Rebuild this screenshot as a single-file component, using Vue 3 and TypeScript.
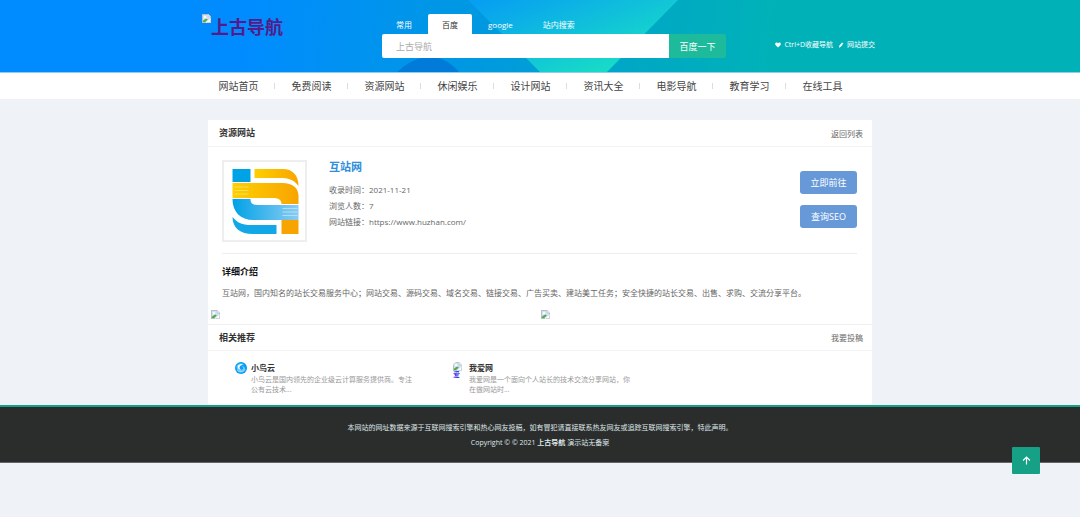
<script setup lang="ts">
import { ref } from 'vue'

interface Engine { name: string; action: string }
interface Site { name: string; text: string; icon: 'bird' | 'missing' }

const engines: Engine[] = [
  { name: '常用', action: '搜索' },
  { name: '百度', action: '百度一下' },
  { name: 'google', action: 'google' },
  { name: '站内搜索', action: '站内搜索' },
]
const active = ref(1)
const query = ref('')

const menu: string[] = ['网站首页', '免费阅读', '资源网站', '休闲娱乐', '设计网站', '资讯大全', '电影导航', '教育学习', '在线工具']

const sites: Site[] = [
  { name: '小鸟云', text: '小鸟云是国内领先的企业级云计算服务提供商。专注公有云技术...', icon: 'bird' },
  { name: '我爱网', text: '我爱网是一个面向个人站长的技术交流分享网站，你在做网站时...', icon: 'missing' },
]

function toTop(): void {
  window.scrollTo({ top: 0, behavior: 'smooth' })
}
</script>

<template>
  <div class="page">
    <svg class="defs" aria-hidden="true">
      <symbol id="missing" viewBox="0 0 10 10">
        <path d="M0 0H7L10 3V10H0Z" fill="#b9bec4" />
        <path d="M1 1H6.5V3.5H9V9H1Z" fill="#cfe0f7" />
        <circle cx="3.4" cy="3.6" r="1.3" fill="#fff" />
        <path d="M1 9V7.5L4.5 5L6.5 6.2L3.5 9Z" fill="#4fae3c" />
        <path d="M4 10L10 4.6V10Z" fill="#fff" />
        <path d="M7 0V3H10Z" fill="#e4e6e9" />
        <path d="M5.5 9.5H9.5V6" fill="none" stroke="#b9bec4" stroke-width="0.8" />
      </symbol>
    </svg>

    <header class="top">
      <svg class="art" viewBox="0 0 1080 72" preserveAspectRatio="none" aria-hidden="true">
        <defs>
          <linearGradient id="base" gradientUnits="userSpaceOnUse" x1="250" y1="0" x2="770" y2="60">
            <stop offset="0" stop-color="#008cff" />
            <stop offset="0.45" stop-color="#0099e0" />
            <stop offset="0.75" stop-color="#00a8c4" />
            <stop offset="1" stop-color="#00b2b8" />
          </linearGradient>
          <linearGradient id="band" gradientUnits="userSpaceOnUse" x1="510" y1="-10" x2="550" y2="90">
            <stop offset="0" stop-color="#079ff2" />
            <stop offset="1" stop-color="#17dac8" />
          </linearGradient>
        </defs>
        <rect width="1080" height="72" fill="url(#base)" />
        <path d="M468 0H678L607 72H540Z" fill="url(#band)" />
        <path d="M397 72C419 52 442 52 459 72Z" fill="#007bda" />
      </svg>
      <div class="wrap top-row">
        <a class="brand" href="#">
          <svg class="gap-icon"><use href="#missing" /></svg>
          <span>上古导航</span>
        </a>
        <form class="search" @submit.prevent>
          <div class="tabs">
            <button
              v-for="(e, i) in engines"
              :key="e.name"
              type="button"
              :class="['tab', { on: i === active }]"
              @click="active = i"
            >{{ e.name }}</button>
          </div>
          <div class="field">
            <input v-model="query" type="text" placeholder="上古导航" aria-label="搜索" />
            <button type="submit" class="go">{{ engines[active].action }}</button>
          </div>
        </form>
        <div class="quick">
          <a href="#">
            <svg viewBox="0 0 12 12"><path d="M6 11L1 6C-0.5 3.5 1 1 3.2 1C4.6 1 5.6 1.8 6 2.8C6.4 1.8 7.4 1 8.8 1C11 1 12.5 3.5 11 6Z" fill="#fff" /></svg>
            Ctrl+D收藏导航
          </a>
          <a href="#">
            <svg viewBox="0 0 12 12"><path d="M8 0.8L10.8 3.2L5.6 9.6L2 11.6L2.6 7.4Z" fill="#fff" /></svg>
            网站提交
          </a>
        </div>
      </div>
    </header>

    <nav class="menu">
      <div class="wrap menu-row">
        <a v-for="m in menu" :key="m" href="#">{{ m }}</a>
      </div>
    </nav>

    <main class="card">
      <div class="bar">
        <h2>资源网站</h2>
        <a href="#">返回列表</a>
      </div>
      <section class="detail">
        <div class="intro">
          <div class="frame">
            <svg viewBox="0 0 80 78" role="img" aria-label="互站网">
              <defs>
                <linearGradient id="gold" x1="0" x2="1"><stop offset="0" stop-color="#fdd000" /><stop offset="1" stop-color="#f8a400" /></linearGradient>
                <linearGradient id="sky" x1="0" x2="1"><stop offset="0" stop-color="#00a2e6" /><stop offset="1" stop-color="#8accf3" /></linearGradient>
              </defs>
              <path d="M8 7H26V20H8Z" fill="#00a2e6" />
              <path d="M30 7H58C68 7 74 13 74 24C69 17 63 16 56 16H30Z" fill="url(#gold)" />
              <path d="M8 21H58C68 21 74 26 74 34V42H57C57 38 54 36 49 36H8Z" fill="url(#gold)" />
              <path d="M8 37H26C26 41 28 43 33 43H74V58H29C16 58 8 50 8 37Z" fill="url(#sky)" />
              <path d="M8 55C13 61 18 63 26 63H52V72H28C16 72 8 66 8 55Z" fill="#12a8e8" />
              <path d="M57 58H74V72H57Z" fill="#f8a400" />
              <path d="M10 25H24M10 28.5H24M10 32H24" stroke="#fee36b" stroke-width="0.8" />
              <path d="M58 46.5H73M58 50H73M58 53.5H73" stroke="#bfe3f9" stroke-width="0.8" />
            </svg>
          </div>
          <div class="facts">
            <h1>互站网</h1>
            <p>收录时间：2021-11-21</p>
            <p>浏览人数：7</p>
            <p>网站链接：https://www.huzhan.com/</p>
          </div>
          <div class="actions">
            <a href="#">立即前往</a>
            <a href="#">查询SEO</a>
          </div>
        </div>
        <h3>详细介绍</h3>
        <p class="about">互站网，国内知名的站长交易服务中心；网站交易、源码交易、域名交易、链接交易、广告买卖、建站美工任务；安全快捷的站长交易、出售、求购、交流分享平台。</p>
      </section>
      <div class="ads">
        <a href="#" aria-label="广告"><svg class="gap-icon"><use href="#missing" /></svg></a>
        <a href="#" aria-label="广告"><svg class="gap-icon"><use href="#missing" /></svg></a>
      </div>
      <div class="bar related">
        <h2>相关推荐</h2>
        <a href="#">我要投稿</a>
      </div>
      <div class="sites">
        <a v-for="s in sites" :key="s.name" class="site" href="#">
          <span class="avatar">
            <svg v-if="s.icon === 'bird'" viewBox="0 0 24 24">
              <circle cx="12" cy="12" r="12" fill="#079cf5" />
              <path d="M3 9C5 3 13 1 18 5C12 4 8 7 8 11C8 15 12 17 15 15C18 13 16 9 12 9C17 7 21 11 20 15C18 21 9 22 5 16C4 14 3 12 3 9Z" fill="#72cdfb" />
              <path d="M6 8C8 4 14 3 17 6C12 5 9 8 9 11C9 14 12 15 14 14C10 17 5 13 6 8Z" fill="#fff" />
              <path d="M4 16C8 22 17 21 20 15" fill="none" stroke="#d8f2ff" stroke-width="1.2" />
            </svg>
            <template v-else>
              <svg class="gap-icon round"><use href="#missing" /></svg>
              <span class="alt">爱</span>
            </template>
          </span>
          <span class="words">
            <strong>{{ s.name }}</strong>
            <span>{{ s.text }}</span>
          </span>
        </a>
      </div>
    </main>

    <footer class="foot">
      <p>本网站的网址数据来源于互联网搜索引擎和热心网友投稿，如有冒犯请直接联系热友网友或追踪互联网搜索引擎，特此声明。</p>
      <p>Copyright © © 2021 <b>上古导航</b> 演示站无备案</p>
    </footer>

    <button class="up" type="button" aria-label="返回顶部" @click="toTop">
      <svg viewBox="0 0 10 10"><path d="M5 9.5V1.5M1.2 5L5 1.3L8.8 5" fill="none" stroke="#fff" stroke-width="1.3" /></svg>
    </button>
  </div>
</template>

<style>
body { background: #eff3f8; }
</style>

<style scoped>
.page {
  font-family: "Open Sans", "Noto Sans CJK SC", sans-serif;
  font-size: 8px;
  color: #666;
}
.page * { box-sizing: border-box; }
a { color: inherit; text-decoration: none; }
h1, h2, h3, p { margin: 0; }
button, input { font-family: inherit; border: 0; padding: 0; }
button { cursor: pointer; }
.defs { position: absolute; width: 0; height: 0; }
.gap-icon { display: block; flex: none; width: 9px; height: 9px; }
.wrap { max-width: 676px; margin: 0 auto; }

.top { position: relative; border-bottom: 1px solid #8fcdec; }
.art { position: absolute; inset: 0; width: 100%; height: 100%; }
.top-row {
  position: relative;
  display: flex;
  align-items: flex-start;
  padding: 14px 3px 14px 0;
}
.brand {
  display: flex;
  width: 180px;
  color: #551a8b;
  font-size: 18px;
  font-weight: 700;
  line-height: 26px;
}
.search { width: 344px; }
.tabs { display: flex; gap: 2px; }
.tab {
  height: 20px;
  padding: 0 14px;
  border-radius: 2px 2px 0 0;
  background: transparent;
  color: #fff;
  font-size: 8px;
}
.tab.on { background: #fff; color: #333; }
.field { display: flex; height: 24px; }
.field input {
  flex: 1;
  min-width: 0;
  padding: 0 14px;
  border-radius: 2px 0 0 2px;
  background: #fff;
  color: #333;
  font-size: 9px;
  outline: 0;
}
.field input::placeholder { color: #aaa; }
.go {
  width: 57px;
  border-radius: 0 2px 2px 0;
  background: #1dbb9b;
  color: #fff;
  font-size: 9px;
}
.quick {
  display: flex;
  gap: 5px;
  margin-left: auto;
  padding-top: 26px;
  color: #fff;
  font-size: 7px;
  line-height: 10px;
}
.quick a { display: flex; align-items: center; gap: 3px; white-space: nowrap; }
.quick svg { width: 6px; height: 6px; }

.menu { background: #fff; }
.menu-row { display: flex; }
.menu a {
  display: flex;
  align-items: center;
  justify-content: center;
  width: 73px;
  color: #444;
  font-size: 10px;
  line-height: 26px;
}
.menu a:not(:last-child) {
  background: linear-gradient(#ddd, #ddd) right center / 1px 6px no-repeat;
}

.card { max-width: 664px; margin: 21px auto 0; background: #fff; }
.bar {
  display: flex;
  align-items: center;
  justify-content: space-between;
  padding: 0 9px 0 11px;
  border-bottom: 1px solid #f3f3f3;
}
.bar h2 { font-size: 9px; font-weight: 700; color: #333; line-height: 26px; }
.bar a { padding-top: 2px; line-height: 24px; }
.detail { padding: 13px 15px 0 14px; }
.intro {
  display: flex;
  align-items: flex-start;
  padding-bottom: 11px;
  border-bottom: 1px solid #eee;
}
.frame { width: 85px; border: 2px solid #eee; }
.frame svg { display: block; width: 100%; height: 78px; }
.facts { margin-left: 22px; }
.facts h1 { margin-bottom: 8px; color: #2f8ddb; font-size: 11px; line-height: 14px; }
.facts p { line-height: 16px; }
.actions {
  display: flex;
  flex-direction: column;
  gap: 11px;
  width: 57px;
  margin: 11px 0 0 auto;
}
.actions a {
  border-radius: 3px;
  background: #6799d8;
  color: #fff;
  font-size: 9px;
  line-height: 23px;
  text-align: center;
}
.detail h3 { margin-top: 10px; color: #111; font-size: 9px; line-height: 16px; }
.about { margin-top: 4px; line-height: 18px; }
.ads { display: grid; grid-template-columns: 1fr 1fr; padding: 8px 1px 5px 3px; }
.related { border-top: 1px solid #eee; }
.related h2, .related a { line-height: 24px; padding: 0; }
.related { padding-top: 1px; }
.sites { display: flex; padding: 11px 27px 10px; }
.site { display: flex; gap: 4px; width: 218px; }
.avatar { flex: none; width: 12px; }
.avatar svg:not(.gap-icon) { display: block; width: 12px; height: 12px; }
.round { border-radius: 5px 5px 0 0; }
.alt { display: block; color: #00e; font-size: 7px; line-height: 7px; }
.words { width: 162px; color: #999; font-size: 7px; line-height: 10px; }
.words strong { display: block; margin-bottom: 1px; color: #333; font-size: 8px; line-height: 12px; }
.words span { display: block; }

.foot {
  padding: 13px 0 12px;
  border-top: 2px solid #16a085;
  border-bottom: 1px solid #666;
  background: #2b2d2c;
  color: #dfe6e9;
  font-size: 7px;
  line-height: 15px;
  text-align: center;
}
.up {
  position: fixed;
  right: 40px;
  bottom: 43px;
  display: flex;
  align-items: center;
  justify-content: center;
  width: 28px;
  height: 27px;
  border-radius: 1px;
  background: #16a085;
}
.up svg { width: 9px; height: 9px; }
</style>
